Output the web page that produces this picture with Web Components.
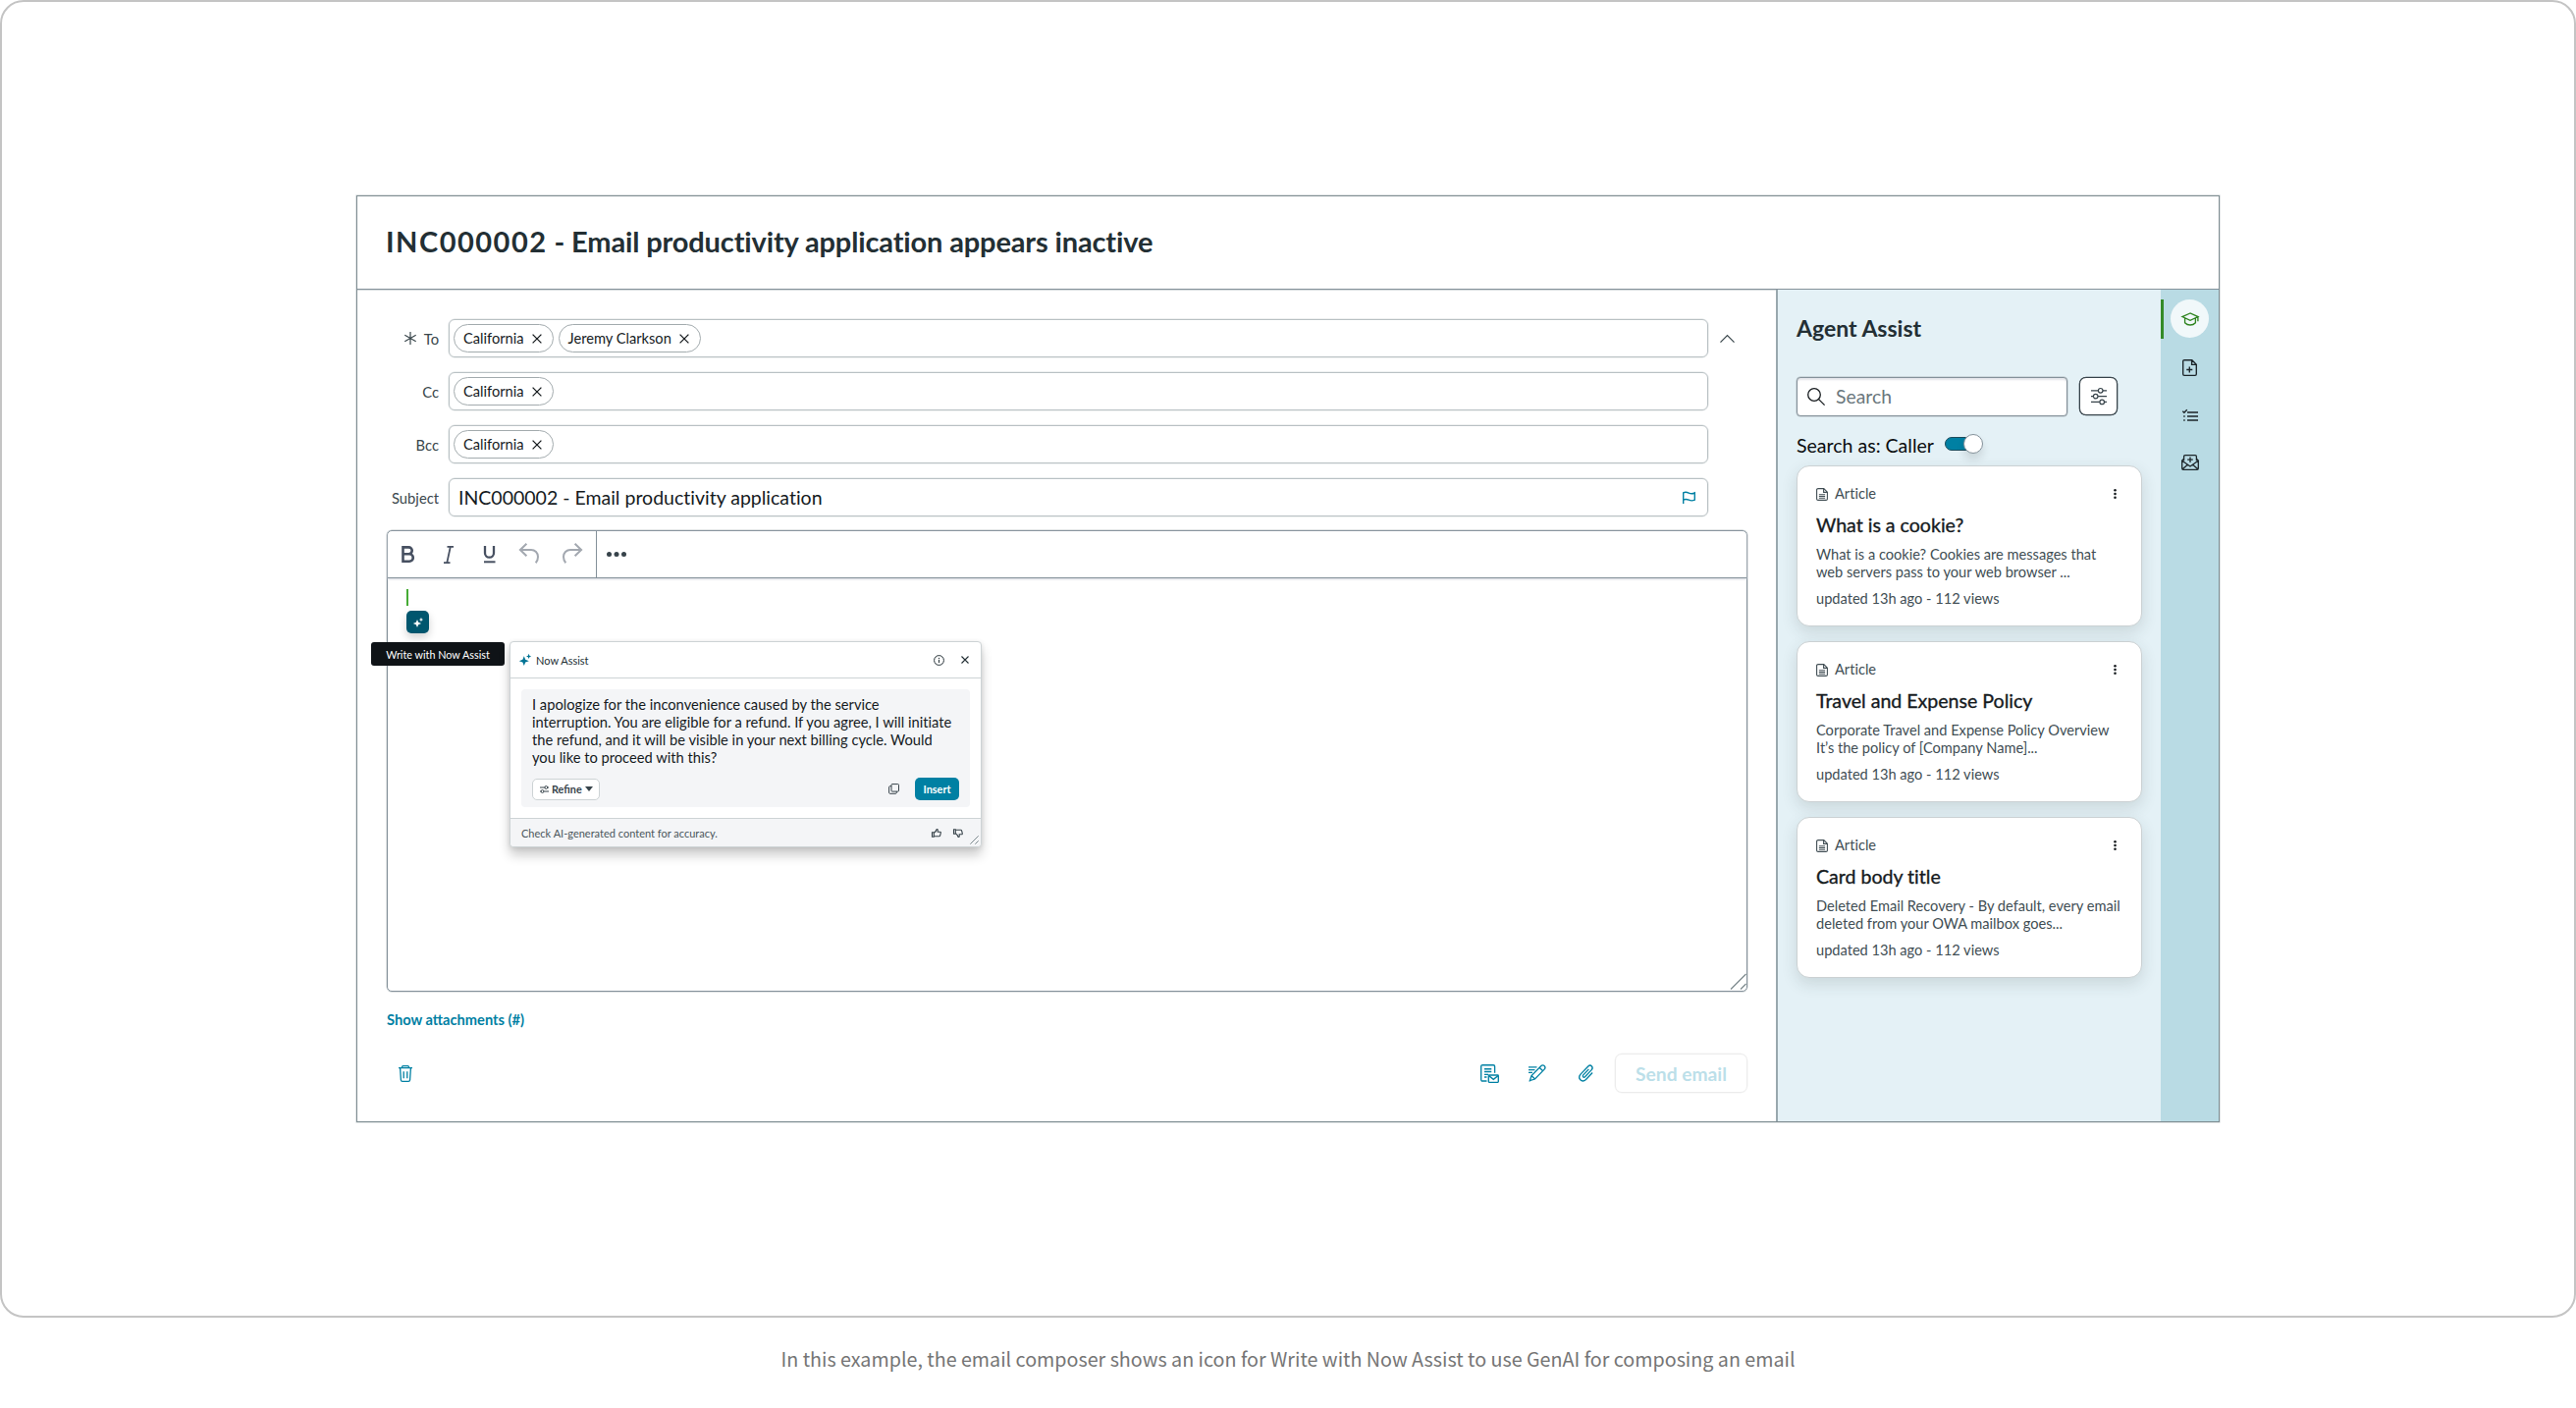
<!DOCTYPE html>
<html lang="en"><head><meta charset="utf-8"><title>Email composer with Now Assist</title>
<style>
html,body{margin:0;height:100%;background:#fff}
body{font-family:Lato,"Liberation Sans",sans-serif;font-variant-ligatures:none;overflow:hidden}
</style></head>
<body>
<figure-stage>
  <agent-workspace slot="stage"></agent-workspace>
  <span slot="caption">In this example, the email composer shows an icon for Write with Now Assist to use GenAI for composing an email</span>
</figure-stage>
<script>
const define=(name,html)=>customElements.define(name,class extends HTMLElement{
  connectedCallback(){
    if(this.shadowRoot)return;
    const r=this.attachShadow({mode:'open'});
    r.innerHTML='<style>*{box-sizing:border-box}:host{box-sizing:border-box}svg{display:block;overflow:visible}</style>'+(typeof html==='function'?html(this):html);
  }
});

/* name: [width, height, markup, stroke width] */
const ICONS={
 x:[10,10,'<path d="M.6.6 9.4 9.4M9.4.6.6 9.4"/>',1.3],
 xs:[8,8,'<path d="M.5.5 7.5 7.5M7.5.5.5 7.5"/>',1.1],
 star:[12,13,'<path d="M6 0v13M.3 3.2l11.4 6.6M11.7 3.2.3 9.8"/>',1.2],
 up:[15,8,'<path d="M.5 7.6 7.5.6l7 7"/>',1.3],
 flag:[13,12,'<path d="M.7 12V.8c2-1 3.700-.6 5.600.3s4 .9 6-.1v7.200c-2 .9-4 .9-6 0S2.700 7.100.7 8"/>',1.4],
 bold:[14,17,'<path d="M1.500 1.400h5.800a3.400 3.400 0 0 1 0 6.900H1.500zM1.500 8.300h6.600a3.700 3.700 0 0 1 0 7.400H1.500z"/>',2.600],
 italic:[10,18,'<path d="M3.500.9H10M0 17.100h6.500M6.800.9 3.300 17.100"/>',1.800],
 under:[13,18,'<path d="M2 0v7.200a4.500 4.500 0 0 0 9 0V0" stroke-width="2.300"/><path d="M1 16.300h11.500" stroke-width="2"/>',2],
 undo:[20,21,'<path d="M7.400.8.9 7l6.500 6.200M1.200 7H12c4 0 7 3.200 7 7 0 2.500-.8 4.700-2.300 6.300"/>',2],
 redo:[20,21,'<path d="M12.600.8 19.100 7l-6.500 6.200M18.800 7H8c-4 0-7 3.200-7 7 0 2.500.8 4.700 2.300 6.300"/>',2],
 more:[20,5,'<g fill="currentColor" stroke="none"><circle cx="2.500" cy="2.500" r="2.500"/><circle cx="10" cy="2.500" r="2.500"/><circle cx="17.500" cy="2.500" r="2.500"/></g>',0],
 kebab:[3,10,'<g fill="currentColor" stroke="none"><circle cx="1.500" cy="1.300" r="1.300"/><circle cx="1.500" cy="5" r="1.300"/><circle cx="1.500" cy="8.700" r="1.300"/></g>',0],
 spark:[12,12,'<g fill="currentColor" stroke="none"><path d="M4.800 2.300 6.200 5.800l3.600 1.400-3.600 1.400-1.400 3.500-1.400-3.500L-.2 7.200l3.600-1.400z"/><path d="m9.600-.2.75 1.850L12.200 2.400l-1.850.75L9.600 5l-.75-1.850L7 2.400l1.850-.75z"/></g>',0],
 info:[11,11,'<circle cx="5.500" cy="5.500" r="4.900"/><path d="M5.500 4.800v3.200M5.500 2.900v1.100"/>',1],
 tune:[9,8,'<path d="M0 2h4.800M0 6h.8M4.200 6H9M7.800 2H9"/><circle cx="6.300" cy="2" r="1.450"/><circle cx="2.500" cy="6" r="1.450"/>',1],
 copy:[11,11,'<rect x="3" y=".6" width="7.500" height="7.500" rx=".8"/><path d="M3 2.700H1.500a.9.9 0 0 0-.9.9v5.800c0 .5.400.9.900.9h5.900c.5 0 .9-.4.900-.9V8.100"/>',1],
 thumb:[10,9,'<path d="M.5 3.800h1.800v4.500H.5zM2.600 7.800h5.100c.5 0 .8-.2.900-.7l.7-3c.1-.6-.1-.8-.7-.8H6.200V1.100c0-.8-1.100-.9-1.300-.1-.3 1.200-1 2.200-2.300 3"/>',1.100],
 thumbdown:[10,9,'<g transform="matrix(1 0 0 -1 0 9)"><path d="M.5 3.800h1.800v4.500H.5zM2.600 7.800h5.100c.5 0 .8-.2.900-.7l.7-3c.1-.6-.1-.8-.7-.8H6.200V1.100c0-.8-1.100-.9-1.300-.1-.3 1.200-1 2.200-2.300 3"/></g>',1.100],
 grip:[9,9,'<path d="M.3 8.700 8.700.3M5.300 8.700l3.400-3.400"/>',1],
 gripL:[16,16,'<path d="M0 15.500 15.500 0M10 15.500l5.500-5.500"/>',1.200],
 trash:[14,17,'<path d="M0 2.600h14M3.600 2.400V1.500c0-.5.300-.9.900-.9h5c.6 0 .9.400.9.900v.9M1.600 2.800l.8 12.200c.1.900.6 1.400 1.500 1.400h6.200c.9 0 1.400-.5 1.500-1.400l.8-12.200M5.200 6.200v7M8.800 6.200v7"/>',1.300],
 template:[19,19,'<path d="M6.500 17H2.200C1.300 17 .7 16.500.7 15.600V2C.7 1.200 1.300.7 2.100.7h11.100c.8 0 1.400.5 1.400 1.300v6.800M4 4.700h7.300M4 7.500h7.300M4 10.300h4M4 13h2.500"/><rect x="8.300" y="11" width="10" height="7.300" rx=".7"/><path d="m8.600 11.600 4.700 3.700 4.700-3.700"/>',1.350],
 sign:[18,18,'<path d="M1.400 16.600 3 11.500 12.700 1.700c1-1 2.500-1 3.500-.1.900 1 .9 2.500-.1 3.500L6.500 15zM11.200 3.300l3.400 3.400M3 11.500 6.500 15M0 2.900h8.500M0 5.600h6.500M0 8.300h4M.8 17.300l1-1.200"/>',1.300],
 clip:[15,18,'<path d="m10.400 4.900-5.700 6c-1.200 1.400.5 3 1.800 1.800l6.700-7.100c2.300-2.600-.7-6-3.400-3.600L2.200 9.900c-3.900 4.500 1.100 9.300 5.300 5.500l6.600-6.900"/>',1.350],
 search:[18,18,'<circle cx="7" cy="7" r="6.300"/><path d="m11.600 11.600 6 6"/>',1.300],
 sliders:[16,17,'<path d="M0 2.800h7.400M12 2.800h4M0 8.600h2.300M7.100 8.600H16M0 14.400h8.800M13.500 14.400H16"/><circle cx="9.700" cy="2.800" r="2.300"/><circle cx="4.700" cy="8.600" r="2.300"/><circle cx="11.200" cy="14.400" r="2.300"/>',1.200],
 doc:[12,13,'<path d="M7.800.6H2C1.200.6.6 1 .6 1.800v9.400c0 .8.600 1.200 1.400 1.200h8c.8 0 1.400-.4 1.400-1.200V4.200zM7.600.8v3.600h3.600M2.900 6.700h6.200M2.900 8.500h6.200M2.900 10.300h6.200"/>',1.100],
 cap:[18,14,'<path d="M9 1 1 4.600l8 3.700 8-3.700zM3.600 6v4.700C5.200 12.400 7 13 9 13s3.800-.6 5.400-2.300V6M16.900 4.800v4.500"/>',1.350],
 filePlus:[15,17,'<path d="M9.800.7H2C1.200.7.7 1.200.7 2v13c0 .8.500 1.300 1.300 1.300h11c.8 0 1.300-.5 1.300-1.300V5.200zM9.600.8v4.600h4.500M4.300 10.500h6M7.300 7.500v6"/>',1.350],
 list:[16,12,'<path d="M5 3h11M5 7h11M5 11h11M1.200 7h1.500M1.200 11h1.500" stroke-width="1.300"/><path d="m.3 1.700 1.600 1.500L4.800.3" stroke-width="1.400"/>',1.200],
 mailPlus:[18,16,'<path d="M2.600 6.200V2c0-.8.500-1.300 1.300-1.300h10.200c.8 0 1.300.5 1.300 1.300v4.200M2.600 4.300.7 6v8c0 .8.500 1.300 1.300 1.300h14c.8 0 1.300-.5 1.300-1.300V6l-1.900-1.700M.8 6.200 9 12l8.200-5.800M1.200 14.800l5.200-4.600M16.800 14.800l-5.200-4.600M6.200 5.200h5.600M9 2.500V8"/>',1.300]
};
define('ui-icon',el=>{const[w,h,m,s]=ICONS[el.getAttribute('name')];
 return `<style>:host{display:inline-block;flex:none}</style><svg width="${w}" height="${h}" viewBox="0 0 ${w} ${h}" fill="none" stroke="currentColor" stroke-width="${s}">${m}</svg>`});

define('figure-stage',`<style>
:host{display:flex;flex-direction:column;width:2624px;height:1434px}
.frame{height:1342px;border:2px solid #c4c4c4;border-radius:24px;padding:197px 361px 0}
.cap{flex:1;display:flex;justify-content:center;padding-top:28px;font:400 19.69px/28px "Noto Sans CJK SC",sans-serif;color:#757575}
</style><div class="frame"><slot name="stage"></slot></div><div class="cap"><slot name="caption"></slot></div>`);

define('agent-workspace',`<style>
:host{display:flex;flex-direction:column;width:1898px;height:944px;border:1px solid #7f8d92;box-shadow:0 0 0 .5px #c3cacc}
header{height:95px;border-bottom:1px solid #84919a;box-shadow:0 1px 0 #d7dcde;display:flex;align-items:center;padding:0 0 3px 29px;font-weight:700;font-size:29px;color:#232f34;white-space:pre}
header .n{letter-spacing:1.500px}header .t{letter-spacing:-.140px}
.b{flex:1;display:flex;min-height:0}
</style><header><span class="n">INC000002</span><span class="t"> - Email productivity application appears inactive</span></header>
<div class="b"><email-composer></email-composer><assist-panel></assist-panel><side-rail></side-rail></div>`);

define('recipient-chip',`<style>
:host{display:flex;align-items:center;gap:8px;height:29px;border:1px solid #a3abae;border-radius:15px;padding:0 11px 0 9px;font-size:14.650px;color:#161b1e;background:#fff}
</style><slot></slot><ui-icon name="x"></ui-icon>`);

define('form-row',el=>`<style>
:host{display:flex;align-items:center;height:39px}
.l{width:53px;margin-right:10px;display:flex;justify-content:flex-end;align-items:center;gap:8px;font-size:14.750px;color:#3a474c;white-space:nowrap}
.f{width:1283px;height:39px;border:1px solid #b9c1c4;box-shadow:0 0 0 .5px #dfe3e4;border-radius:6px;display:flex;align-items:center;gap:5px;padding:0 12px 0 4px}
.e{margin:-4px 0 0 12px;color:#3a474c}
</style><div class="l">${el.hasAttribute('required')?'<ui-icon name="star"></ui-icon>':''}<span>${el.getAttribute('label')}</span></div><div class="f"><slot></slot></div><div class="e"><slot name="end"></slot></div>`);

define('email-composer',`<style>
:host{display:flex;flex-direction:column;width:1445px;padding:30px 0 0 30px}
.rows{display:flex;flex-direction:column;gap:15px;margin-bottom:14px}
.s{font-size:19.500px;color:#161b1e;margin-left:5px;flex:1}
.flag{color:#0080a3}
.att{margin-top:19px;font-weight:700;font-size:14.650px;line-height:20px;color:#0080a3;font-variant-ligatures:normal}
.bar{display:flex;align-items:center;margin-top:24px;height:40px;width:1386px;padding-left:12px;color:#0080a3}
.bar .sp{flex:1}
.bar ui-icon+ui-icon{margin-left:30px}
.send{margin-left:22px;width:135px;height:40px;border:1px solid #ececec;box-shadow:0 0 0 .5px #f4f4f4;border-radius:7px;display:flex;align-items:center;justify-content:center;font-size:19.230px;font-weight:700;color:#bcdfe9}
</style>
<div class="rows">
<form-row label="To" required><recipient-chip>California</recipient-chip><recipient-chip>Jeremy Clarkson</recipient-chip><ui-icon slot="end" name="up"></ui-icon></form-row>
<form-row label="Cc"><recipient-chip>California</recipient-chip></form-row>
<form-row label="Bcc"><recipient-chip>California</recipient-chip></form-row>
<form-row label="Subject"><span class="s">INC000002 - Email productivity application</span><ui-icon class="flag" name="flag"></ui-icon></form-row>
</div>
<rich-editor></rich-editor>
<div class="att">Show attachments (#)</div>
<div class="bar"><ui-icon name="trash"></ui-icon><span class="sp"></span><ui-icon name="template"></ui-icon><ui-icon name="sign"></ui-icon><ui-icon name="clip" style="margin-left:33px"></ui-icon><div class="send">Send email</div></div>`);

define('rich-editor',`<style>
:host{display:block;position:relative;width:1386px;height:470px;border:1px solid #84919a;box-shadow:0 0 0 .5px #c3cacc;border-radius:5px}
.tb{height:48px;border-bottom:1px solid #84919a;box-shadow:0 1px 2px #d3d6dd;display:flex;align-items:center;color:#475061}
.fmt{display:flex;align-items:center;height:100%;width:213px;border-right:1px solid #84919a;padding-left:14px}
.m{margin-left:10px;color:#37434a}
.g{color:#a3a8b0}
.caret{width:2px;height:17px;background:#45ab35;margin:11px 0 5px 19px}
.ai{width:23px;height:23px;margin-left:19px;border-radius:5px;background:#00566e;color:#fff;display:flex;align-items:center;justify-content:center;box-shadow:0 4px 8px rgba(0,0,0,.18)}
.tip{position:absolute;left:-17px;top:113px;width:136px;height:24px;border-radius:3px;background:#0f1317;color:#fff;font-size:10.800px;display:flex;align-items:center;justify-content:center}
assist-popup{position:absolute;left:124px;top:112px}
.grip{position:absolute;right:0;bottom:1px;color:#7b888d}
</style>
<div class="tb"><div class="fmt"><ui-icon name="bold"></ui-icon><ui-icon name="italic" style="margin-left:29px"></ui-icon><ui-icon name="under" style="margin-left:30px"></ui-icon><ui-icon class="g" name="undo" style="margin-left:24px;margin-top:-2px"></ui-icon><ui-icon class="g" name="redo" style="margin-left:24px;margin-top:-2px"></ui-icon></div><ui-icon class="m" name="more"></ui-icon></div>
<div class="caret"></div><div class="ai"><ui-icon name="spark" style="transform:scale(.83)"></ui-icon></div>
<div class="tip">Write with Now Assist</div>
<assist-popup></assist-popup>
<ui-icon class="grip" name="gripL"></ui-icon>`);

define('assist-popup',`<style>
:host{display:flex;flex-direction:column;width:481px;height:210px;background:#fff;border:1px solid #cdd3d5;border-radius:4px;box-shadow:0 8px 12px rgba(0,0,0,.2),0 1px 5px rgba(0,0,0,.1);color:#37434a}
.h{height:37px;border-bottom:1px solid #cdd3d5;display:flex;align-items:center;padding:0 12px 0 9px;font-size:11px;color:#232f34}
.h span{flex:1;margin-left:5px;padding-top:1px}
.h .sp{color:#007394}
.box{margin:11px 11px;height:120px;background:#f4f5f7;border-radius:4px;padding:6px 11px 0;display:flex;flex-direction:column}
p{margin:0;font-size:14.700px;line-height:18px;color:#161b1e;white-space:nowrap}
.a{display:flex;align-items:center;margin-top:12px}
.r{height:22px;width:69px;border:1px solid #cdd3d5;border-radius:5px;background:#fff;display:flex;align-items:center;gap:3px;padding-left:7px;font-weight:700;font-size:10.830px;font-variant-ligatures:normal}
.tri{border:4px solid transparent;border-top:5.500px solid #37434a;border-bottom:0}
.i{height:23px;width:45px;border-radius:5px;background:#0080a3;color:#fff;font-weight:700;font-size:10.890px;display:flex;align-items:center;justify-content:center;margin-left:16px}
.f{flex:1;border-top:1px solid #cdd3d5;background:#f4f5f7;border-radius:0 0 4px 4px;display:flex;align-items:center;padding:0 18px 0 11px;font-size:11.020px;color:#4a565b;position:relative}
.f ui-icon{color:#37434a}
.f span{flex:1}
.f .g{position:absolute;right:2px;bottom:2px;color:#7b888d}
</style>
<div class="h"><ui-icon class="sp" name="spark"></ui-icon><span>Now Assist</span><ui-icon name="info"></ui-icon><ui-icon name="xs" style="margin-left:17px"></ui-icon></div>
<div class="box"><p>I apologize for the inconvenience caused by the service<br>interruption. You are eligible for a refund. If you agree, I will initiate<br>the refund, and it will be visible in your next billing cycle. Would<br>you like to proceed with this?</p>
<div class="a"><div class="r"><ui-icon name="tune"></ui-icon>Refine<div class="tri"></div></div><span style="flex:1"></span><ui-icon name="copy"></ui-icon><div class="i">Insert</div></div></div>
<div class="f"><span>Check AI-generated content for accuracy.</span><ui-icon name="thumb"></ui-icon><ui-icon name="thumbdown" style="margin-left:12px"></ui-icon><ui-icon class="g" name="grip"></ui-icon></div>`);

define('assist-panel',`<style>
:host{display:flex;flex-direction:column;width:392px;background:#e4f1f6;border-left:2px solid #99a8ae;padding:24px 0 0 19px}
h2{margin:0;font-size:23px;line-height:30px;font-weight:700;color:#232f34}
.s{display:flex;margin-top:35px;gap:12px}
.in{width:276px;height:40px;background:#fff;border:1px solid #84919a;border-radius:4px;box-shadow:inset 0 2px 2px #e4e5ea,0 0 0 .5px #b5c0c4;display:flex;align-items:center;gap:11px;padding:0 0 1px 10px;font-size:19.360px;color:#6a777d}
.in ui-icon{color:#161b1e}
.fb{width:39px;height:39px;border:1px solid #37434a;box-shadow:0 0 0 .3px #37434a;border-radius:7px;background:#fff;display:flex;align-items:center;justify-content:center;color:#37434a}
.t{display:flex;align-items:center;height:24px;margin:17px 0 9px;font-size:19.540px;color:#0a0d0f}
.tg{position:relative;width:38px;height:14px;margin-left:11px;margin-top:-2px;border:1px solid #1d4c5c;border-radius:7px;background:#0080a3}
.tg i{position:absolute;right:-2px;top:-4px;width:20px;height:20px;border-radius:50%;background:#fff;border:1px solid #84919a;box-shadow:0 6px 10px rgba(0,0,0,.12)}
.c{display:flex;flex-direction:column;gap:15px}
</style><h2>Agent Assist</h2>
<div class="s"><div class="in"><ui-icon name="search"></ui-icon>Search</div><div class="fb"><ui-icon name="sliders"></ui-icon></div></div>
<div class="t">Search as: Caller<div class="tg"><i></i></div></div>
<div class="c">
<article-card heading="What is a cookie?">What is a cookie? Cookies are messages that<br>web servers pass to your web browser ...</article-card>
<article-card heading="Travel and Expense Policy">Corporate Travel and Expense Policy Overview<br>It’s the policy of [Company Name]...</article-card>
<article-card heading="Card body title">Deleted Email Recovery - By default, every email<br>deleted from your OWA mailbox goes...</article-card>
</div>`);

define('article-card',el=>`<style>
:host{display:block;width:352px;height:164px;border:1px solid #cbd1d3;border-radius:13px;background:#fff;box-shadow:0 6px 16px rgba(40,60,60,.14);padding:19px 19px 0;font-size:14.620px;line-height:18px;color:#414e54;white-space:nowrap}
.k{display:flex;align-items:center}
.k span{flex:1;margin-left:7px}.k .m{color:#161b1e;margin-right:6px}
h3{margin:9px 0 7px;font-size:19.570px;line-height:28px;font-weight:400;color:#161b1e;-webkit-text-stroke:.35px #161b1e}
.u{margin-top:9px}
</style><div class="k"><ui-icon name="doc"></ui-icon><span>Article</span><ui-icon class="m" name="kebab"></ui-icon></div><h3>${el.getAttribute('heading')}</h3><div><slot></slot></div><div class="u">updated 13h ago - 112 views</div>`);

define('side-rail',`<style>
:host{display:flex;flex-direction:column;align-items:center;width:59px;background:#b9dbe4;padding-top:10px;color:#1c2529;position:relative}
.a{width:39px;height:39px;border-radius:50%;background:#f1f8fa;display:flex;align-items:center;justify-content:center;color:#2f8420}
.m{position:absolute;left:0;top:10px;width:3px;height:40px;background:#338a28}
</style><div class="m"></div><div class="a"><ui-icon name="cap"></ui-icon></div>
<ui-icon name="filePlus" style="margin-top:22px"></ui-icon><ui-icon name="list" style="margin-top:34px"></ui-icon><ui-icon name="mailPlus" style="margin-top:34px"></ui-icon>`);
</script></body></html>
